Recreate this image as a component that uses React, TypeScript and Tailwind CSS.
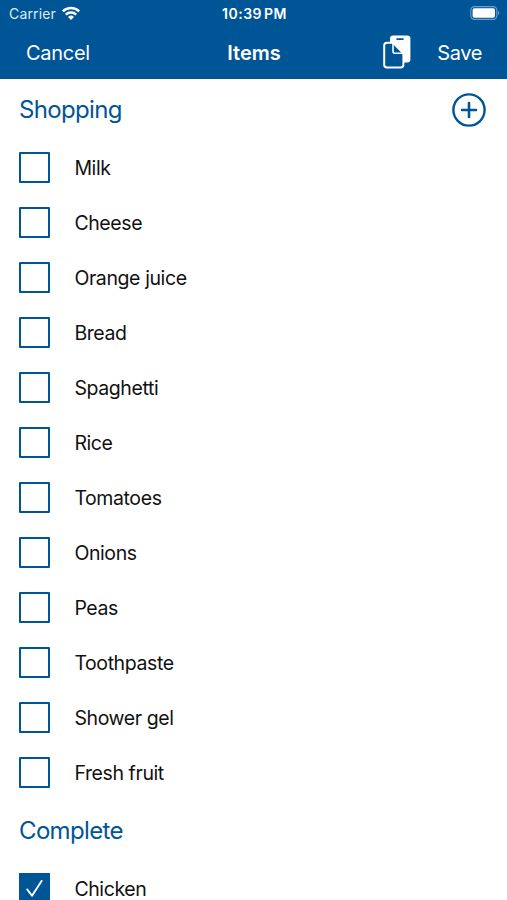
const shopping = [
  'Milk',
  'Cheese',
  'Orange juice',
  'Bread',
  'Spaghetti',
  'Rice',
  'Tomatoes',
  'Onions',
  'Peas',
  'Toothpaste',
  'Shower gel',
  'Fresh fruit',
];
const complete = ['Chicken'];

function StatusBar() {
  return (
    <div className="grid h-[27px] grid-cols-3 items-center pr-[7px] pl-[9px] text-[14px] leading-none">
      <div className="flex items-center gap-[6px]">
        <span className="tracking-[0.15px] text-[#dcebf8]">Carrier</span>
        <svg className="-mt-px" width="18" height="14" viewBox="0 0 18 14" fill="none" stroke="currentColor" strokeWidth="2.5">
          <path d="M.8 5.4a11.6 11.6 0 0 1 16.4 0" />
          <path d="M3.8 8.6a7.4 7.4 0 0 1 10.4 0" />
          <path d="M9 14 6 10.9a4.3 4.3 0 0 1 6 0z" fill="currentColor" stroke="none" />
        </svg>
      </div>
      <span className="text-center font-semibold tracking-[0.5px] whitespace-nowrap [word-spacing:-2px]">10:39 PM</span>
      <svg className="-mt-px justify-self-end" width="30" height="14" viewBox="0 0 30 14">
        <rect x="0.8" y="0.6" width="26" height="12.8" rx="3.6" fill="none" stroke="#6f9fc8" strokeWidth="1.1" />
        <rect x="2.6" y="2.2" width="22.4" height="9.6" rx="1.8" fill="#fff" />
        <path d="M28 4.8c1.8 .8 1.8 3.6 0 4.4z" fill="#6f9fc8" />
      </svg>
    </div>
  );
}

function CopyIcon() {
  return (
    <svg className="-mt-px" width="28" height="34" viewBox="0 0 28 34">
      <rect x="7" y="0.4" width="20.4" height="27" rx="3" fill="#fff" />
      <rect x="13.2" y="3.2" width="7.6" height="1.8" rx="0.9" fill="#005596" />
      <path
        d="M10 7.8H4Q1.2 7.8 1.2 10.6V29.8Q1.2 32.6 4 32.6H17.6Q20.4 32.6 20.4 29.8V18.2L10 7.8z"
        fill="#005596"
        stroke="#fff"
        strokeWidth="2"
        strokeLinejoin="round"
      />
      <path d="M10 8v8.2q0 2 2 2h8.4" fill="none" stroke="#fff" strokeWidth="1.6" />
    </svg>
  );
}

function NavBar() {
  return (
    <div className="grid h-[51px] grid-cols-[1fr_auto_1fr] items-center px-[25px] text-[20px]">
      <button className="justify-self-start pl-px tracking-[-0.3px]">Cancel</button>
      <h1 className="pl-px font-semibold">Items</h1>
      <div className="flex items-center gap-[26px] justify-self-end">
        <button aria-label="Copy">
          <CopyIcon />
        </button>
        <button className="tracking-[-0.4px]">Save</button>
      </div>
    </div>
  );
}

function SectionHeader({ title, addable }: { title: string; addable?: boolean }) {
  return (
    <div className="flex h-[61px] items-center justify-between pr-[21px] pl-[19px] text-[#005596]">
      <h2 className="text-[24px] tracking-[-0.65px]">{title}</h2>
      {addable && (
        <button aria-label="Add item">
          <svg width="34" height="34" viewBox="0 0 34 34" fill="none" stroke="currentColor" strokeLinecap="round">
            <circle cx="17" cy="17" r="15.6" strokeWidth="2.4" />
            <path d="M17 10v14M10 17h14" strokeWidth="2.6" />
          </svg>
        </button>
      )}
    </div>
  );
}

function ItemRow({ label, checked }: { label: string; checked?: boolean }) {
  return (
    <li className="flex h-[55px] items-center gap-[24px] pl-[19px]">
      {checked ? (
        <span className="flex size-[31px] items-center justify-center bg-[#005596]">
          <svg width="17" height="18" viewBox="0 0 17 18" fill="none" stroke="#fff" strokeWidth="1.9" strokeLinecap="round" strokeLinejoin="round">
            <path d="M1.2 9.4 6 15.8 15.6 .9" />
          </svg>
        </span>
      ) : (
        <span className="size-[31px] rounded-[1px] border-2 border-[#005596]" />
      )}
      <span className="pt-[2px] pl-[0.4px] text-[19.5px] tracking-[-0.4px]">{label}</span>
    </li>
  );
}

export default function App() {
  return (
    <div className="h-[900px] w-[507px] overflow-hidden bg-white font-['Inter','Liberation_Sans',sans-serif] text-[#111]">
      <header className="h-[79px] bg-[#005596] text-white">
        <StatusBar />
        <NavBar />
      </header>
      <main>
        <SectionHeader title="Shopping" addable />
        <ul>
          {shopping.map((label) => (
            <ItemRow key={label} label={label} />
          ))}
        </ul>
        <SectionHeader title="Complete" />
        <ul>
          {complete.map((label) => (
            <ItemRow key={label} label={label} checked />
          ))}
        </ul>
      </main>
    </div>
  );
}
